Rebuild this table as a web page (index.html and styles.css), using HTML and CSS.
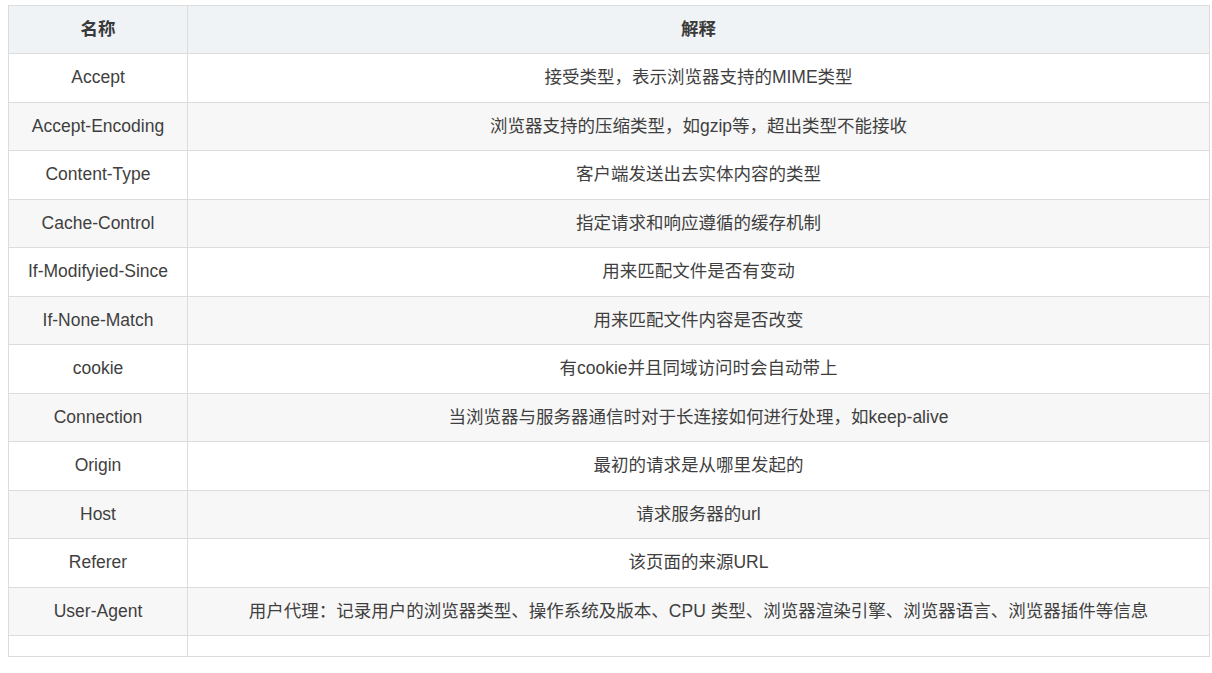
FILE: index.html
```html
<!DOCTYPE html>
<html lang="zh-CN">
<head>
<meta charset="utf-8">
<link rel="stylesheet" href="styles.css">
</head>
<body>
<table class="hdr-table">
  <thead>
    <tr><th class="col-name">名称</th><th>解释</th></tr>
  </thead>
  <tbody>
    <tr><td>Accept</td><td>接受类型，表示浏览器支持的MIME类型</td></tr>
    <tr><td>Accept-Encoding</td><td>浏览器支持的压缩类型，如gzip等，超出类型不能接收</td></tr>
    <tr><td>Content-Type</td><td>客户端发送出去实体内容的类型</td></tr>
    <tr><td>Cache-Control</td><td>指定请求和响应遵循的缓存机制</td></tr>
    <tr><td>If-Modifyied-Since</td><td>用来匹配文件是否有变动</td></tr>
    <tr><td>If-None-Match</td><td>用来匹配文件内容是否改变</td></tr>
    <tr><td>cookie</td><td>有cookie并且同域访问时会自动带上</td></tr>
    <tr><td>Connection</td><td>当浏览器与服务器通信时对于长连接如何进行处理，如keep-alive</td></tr>
    <tr><td>Origin</td><td>最初的请求是从哪里发起的</td></tr>
    <tr><td>Host</td><td>请求服务器的url</td></tr>
    <tr><td>Referer</td><td>该页面的来源URL</td></tr>
    <tr><td>User-Agent</td><td>用户代理：记录用户的浏览器类型、操作系统及版本、CPU 类型、浏览器渲染引擎、浏览器语言、浏览器插件等信息</td></tr>
    <tr class="empty"><td></td><td></td></tr>
  </tbody>
</table>
</body>
</html>
```
FILE: styles.css
```css
html, body {
  margin: 0;
  padding: 0;
  background: #fff;
}
body {
  padding: 5px 2px 0 8px;
  font-family: "Liberation Sans", Arial, "Noto Sans CJK SC", sans-serif;
  font-size: 17.5px;
  color: #3f3f3f;
}
.hdr-table {
  width: 1202px;
  border-collapse: collapse;
  table-layout: fixed;
  font-size: 17.5px;
}
.hdr-table th,
.hdr-table td {
  border: 1px solid #dcdcdc;
  padding: 10px 4px;
  text-align: center;
  vertical-align: middle;
}
.hdr-table th {
  background: #eff3f5;
  font-weight: bold;
  line-height: 27px;
  color: #3a3a3a;
}
.hdr-table td {
  line-height: 27.5px;
}
.col-name {
  width: 170px;
}
.hdr-table tbody tr:nth-child(even) td {
  background: #f7f7f7;
}
.hdr-table tbody tr.empty td {
  background: #fff;
  padding: 10px 4px;
  height: 0;
  line-height: 0;
}
```
